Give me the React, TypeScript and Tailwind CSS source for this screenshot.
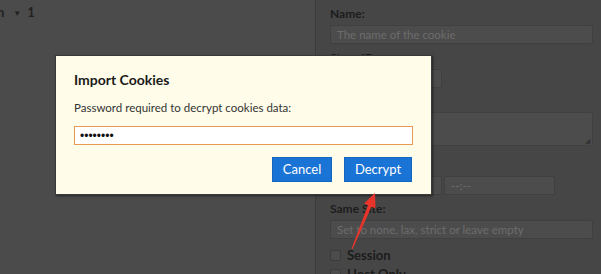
import React from 'react'

const Field = ({ label, children, className = '' }: { label?: string; children: React.ReactNode; className?: string }) => (
  <div className={className}>
    {label && <div className="text-[12px] leading-[14px] font-bold text-[#1c1c1c] mb-[4px]">{label}</div>}
    {children}
  </div>
)

const inputCls =
  'h-[19px] bg-[#4c4c4c] border border-[#404040] rounded-[2px] text-[11.5px] leading-[17px] text-[#6c6c6c] px-[6px]'

export default function App() {
  return (
    <div className="relative w-[601px] h-[274px] overflow-hidden flex bg-[#4b4b4b]" style={{ fontFamily: 'Lato, sans-serif' }}>
      {/* left list (dimmed) */}
      <div className="w-[315px] flex-shrink-0">
        <div className="flex items-center h-[26px] -ml-[3px] text-[13px] font-bold text-[#222]">
          <span>n</span>
          <span className="ml-[9px] text-[8px]">▼</span>
          <span className="ml-[6px]">1</span>
        </div>
      </div>

      {/* right panel */}
      <div className="flex-1 border-l border-[#3c3c3c] bg-[#464646] pl-[14px] pr-[8px] pt-[7px]">
        <Field label="Name:">
          <div className={inputCls}>The name of the cookie</div>
        </Field>
        <Field label="Store ID:" className="mt-[7px]">
          <div className={`${inputCls} w-[112px]`} />
        </Field>
        <Field label="Value:" className="mt-[6px]">
          <div className="relative h-[34px] bg-[#4c4c4c] border border-[#404040] rounded-[2px]">
            <span className="absolute right-[2px] bottom-[1px] text-[#333] text-[7px] leading-none">◢</span>
          </div>
        </Field>
        <Field label="Expiration:" className="mt-[12px]">
          <div className="flex gap-[2px]">
            <div className={`${inputCls} w-[112px]`} />
            <div className={`${inputCls} w-[111px]`}>--:--</div>
          </div>
        </Field>
        <Field label="Same Site:" className="mt-[7px]">
          <div className={inputCls}>Set to none, lax, strict or leave empty</div>
        </Field>
        <div className="flex items-center gap-[6px] mt-[9px] text-[13px] font-bold text-[#1c1c1c] leading-[15px]">
          <span className="w-[11px] h-[11px] border border-[#3a3a3a] bg-[#4c4c4c] rounded-[2px]" />
          Session
        </div>
        <div className="flex items-center gap-[6px] mt-[4px] text-[13px] font-bold text-[#1c1c1c] leading-[15px]">
          <span className="w-[11px] h-[11px] border border-[#3a3a3a] bg-[#4c4c4c] rounded-[2px]" />
          Host Only
        </div>
      </div>

      {/* dialog */}
      <div className="absolute left-[55px] top-[55px] w-[377px] h-[140px] bg-[#fffde9] border border-[#3a3a3a] shadow-[1px_1px_2px_rgba(0,0,0,0.5)] px-[18px] pt-[14px]">
        <div className="text-[14px] leading-[20px] font-bold text-[#1a1a1a]">Import Cookies</div>
        <div className="mt-[10px] text-[11.5px] leading-[16px] text-[#333]">Password required to decrypt cookies data:</div>
        <div
          className="mt-[10px] h-[19px] bg-white border-[1.5px] border-[#e89a55] flex items-center pl-[5px] text-[12px] text-[#111]"
          style={{ fontFamily: '"Liberation Sans", sans-serif' }}
        >
          ••••••••
        </div>
        <div className="flex justify-end gap-[12px] mt-[12px] pr-[1px]">
          <button className="w-[60px] h-[25px] bg-[#1a74d6] border border-[#1566be] text-white text-[13px]">Cancel</button>
          <button className="w-[68px] h-[25px] bg-[#1a74d6] border border-[#1566be] text-white text-[13px]">Decrypt</button>
        </div>
      </div>

      {/* annotation arrow */}
      <svg className="absolute inset-0 pointer-events-none" width="601" height="274" viewBox="0 0 601 274">
        <polygon
          points="375,193 375.5,208.5 371.4,206.7 352.5,249.2 351.5,248.8 368,205.3 364,203.5"
          fill="#e8342a"
        />
      </svg>
    </div>
  )
}
